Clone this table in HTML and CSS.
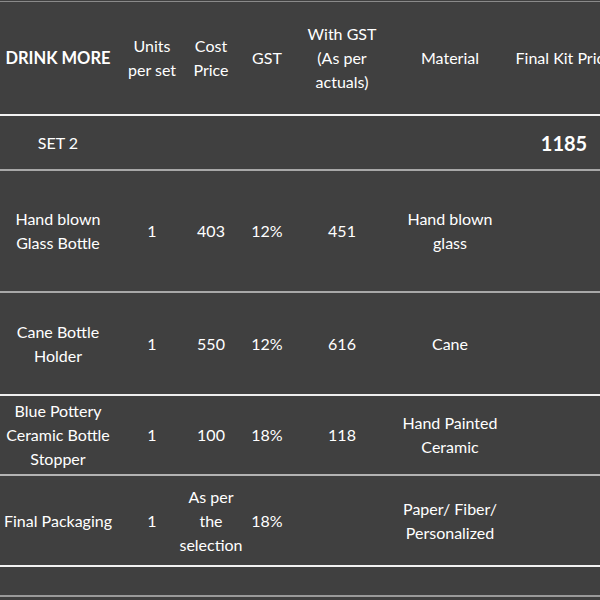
FILE: index.html
```html
<!DOCTYPE html>
<html>
<head>
<meta charset="utf-8">
<link rel="stylesheet" href="styles.css">
</head>
<body>
<div class="sheet">
  <div class="row head">
    <div class="cell title">DRINK MORE</div>
    <div class="cell">Units<br>per set</div>
    <div class="cell">Cost<br>Price</div>
    <div class="cell">GST</div>
    <div class="cell">With GST<br>(As per<br>actuals)</div>
    <div class="cell">Material</div>
    <div class="cell nowrap">Final Kit Price</div>
  </div>
  <div class="row set">
    <div class="cell">SET 2</div>
    <div class="cell"></div>
    <div class="cell"></div>
    <div class="cell"></div>
    <div class="cell"></div>
    <div class="cell"></div>
    <div class="cell total">1185</div>
  </div>
  <div class="row r1">
    <div class="cell">Hand blown<br>Glass Bottle</div>
    <div class="cell">1</div>
    <div class="cell">403</div>
    <div class="cell">12%</div>
    <div class="cell">451</div>
    <div class="cell">Hand blown<br>glass</div>
    <div class="cell"></div>
  </div>
  <div class="row r2">
    <div class="cell">Cane Bottle<br>Holder</div>
    <div class="cell">1</div>
    <div class="cell">550</div>
    <div class="cell">12%</div>
    <div class="cell">616</div>
    <div class="cell">Cane</div>
    <div class="cell"></div>
  </div>
  <div class="row r3">
    <div class="cell">Blue Pottery<br>Ceramic Bottle<br>Stopper</div>
    <div class="cell">1</div>
    <div class="cell">100</div>
    <div class="cell">18%</div>
    <div class="cell">118</div>
    <div class="cell">Hand Painted<br>Ceramic</div>
    <div class="cell"></div>
  </div>
  <div class="row r4">
    <div class="cell">Final Packaging</div>
    <div class="cell">1</div>
    <div class="cell nowrap">As per<br>the<br>selection</div>
    <div class="cell">18%</div>
    <div class="cell"></div>
    <div class="cell">Paper/ Fiber/<br>Personalized</div>
    <div class="cell"></div>
  </div>
  <div class="row r5">
    <div class="cell"></div>
    <div class="cell"></div>
    <div class="cell"></div>
    <div class="cell"></div>
    <div class="cell"></div>
    <div class="cell"></div>
    <div class="cell"></div>
  </div>
</div>
</body>
</html>
```

FILE: styles.css
```css
html, body {
  margin: 0;
  padding: 0;
  background: #404040;
  overflow: hidden;
}
body {
  width: 600px;
  height: 600px;
  padding-top: 1px;
  box-sizing: border-box;
}
.sheet {
  width: 612px;
  border-top: 1px solid #8a8a8a;
  font-family: Lato, "Open Sans", sans-serif;
  font-size: 16px;
  line-height: 24px;
  color: #ffffff;
}
.row {
  display: grid;
  grid-template-columns: 116px 72px 46px 66px 84px 132px 96px;
  box-sizing: border-box;
}
.cell {
  display: flex;
  align-items: center;
  justify-content: center;
  text-align: center;
}
.nowrap { white-space: nowrap; }
.head { height: 114px; border-bottom: 2px solid #f2f2f2; }
.title { font-weight: 700; font-size: 16.5px; white-space: nowrap; }
.set { height: 55px; border-bottom: 2px solid #a8a8a8; }
.total { font-weight: 700; font-size: 20px; }
.r1 { height: 122px; border-bottom: 2px solid #a8a8a8; }
.r2 { height: 103px; border-bottom: 2px solid #eeeeee; }
.r3 { height: 80px; border-bottom: 2px solid #b4b4b4; }
.r4 { height: 91px; border-bottom: 2px solid #f2f2f2; }
.r5 { height: 30px; border-bottom: 2px solid #9a9a9a; }
```
